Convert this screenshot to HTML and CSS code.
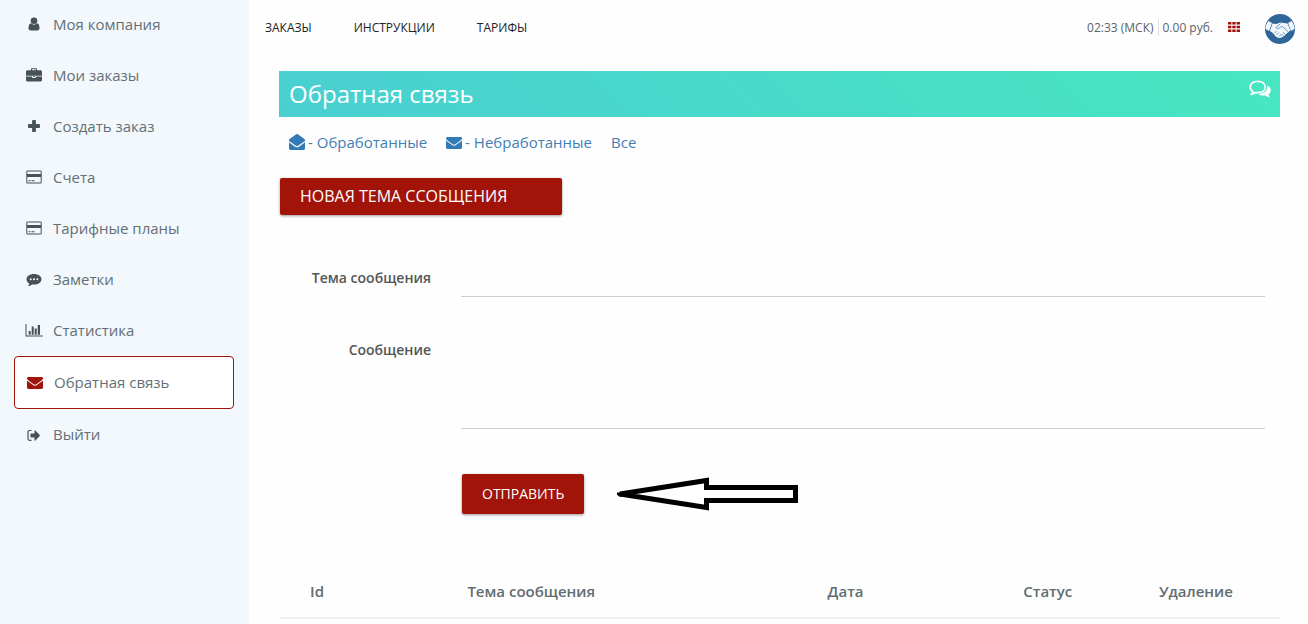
FILE: index.html
```html
<!DOCTYPE html>
<html lang="ru">
  <head>
    <meta charset="UTF-8" />
    <meta name="viewport" content="width=device-width, initial-scale=1.0" />
    <title>Обратная связь</title>
    <link rel="stylesheet" href="styles.css">
  </head>
  <body>
    <!-- Shared icons -->
    <svg class="sprite" aria-hidden="true">
      <symbol id="icon-card" viewBox="0 0 16 14">
        <path fill-rule="evenodd" d="M1.500 0.500h13a1.200 1.200 0 0 1 1.200 1.200v10.600a1.200 1.200 0 0 1-1.200 1.200h-13a1.200 1.200 0 0 1-1.200-1.200V1.700a1.200 1.200 0 0 1 1.200-1.200zM1.300 1.500V4h13.400V1.500zM1.300 7v5.500h13.400V7z" />
        <path d="M2.500 10.300h2v1h-2zM5.500 10.300h3v1h-3z" />
      </symbol>
      <symbol id="icon-mail" viewBox="0 -1 16 14">
        <path d="M0 2.200C0 1.400.6 1 1.400 1h13.200c.8 0 1.400.4 1.400 1.200 0 .8-.5 1.500-1.200 2L9.700 7.900C9.100 8.300 8.600 8.700 8 8.700s-1.100-.4-1.700-.8L1.200 4.200C.5 3.700 0 3 0 2.200z" />
        <path d="M0 4.500c.3.300.6.500.9.700l4.900 3.600c.7.500 1.400.9 2.200.9s1.500-.4 2.200-.9l4.900-3.600c.3-.2.600-.4.900-.7v7.100c0 .8-.6 1.400-1.400 1.400H1.400C.6 13 0 12.400 0 11.600z" />
      </symbol>
    </svg>

    <div class="page">
      <aside class="sidebar">
        <nav class="menu">
          <a class="menu-item" href="#">
            <svg class="icon" viewBox="0 0 16 14"><circle cx="8" cy="3.800" r="3.300" /><path d="M5.200 6.300C3.200 6.500 2.500 8.800 2.500 11c0 1.400.8 2.500 2 2.500h7c1.200 0 2-1.100 2-2.500 0-2.200-.7-4.500-2.700-4.700C9.300 8.100 6.700 8.100 5.200 6.300z" /></svg>
            Моя компания
          </a>
          <a class="menu-item" href="#">
            <svg class="icon" viewBox="0 0 16 14"><path fill-rule="evenodd" d="M5 2.300V1.200C5 .6 5.400.2 6 .2h4c.6 0 1 .4 1 1v1.100h3.500c.8 0 1.500.7 1.500 1.500v4H0v-4c0-.8.700-1.500 1.500-1.500zm1 0h4V1.200H6zM0 8.400h6V9c0 .6.400 1 1 1h2c.6 0 1-.4 1-1v-.6h6v3.600c0 .8-.7 1.500-1.500 1.500h-13C.7 13.500 0 12.800 0 12zM7 8.300h2v.8H7z" /></svg>
            Мои заказы
          </a>
          <a class="menu-item" href="#">
            <svg class="icon" viewBox="0 0 16 14"><path d="M7 1h2c.5 0 .9.400.9.900v3.200h3.200c.5 0 .9.400.9.900v2c0 .5-.4.900-.9.900H9.900v3.200c0 .5-.4.900-.9.900H7c-.5 0-.9-.4-.9-.9V8.900H2.900C2.400 8.900 2 8.500 2 8V6c0-.5.400-.9.900-.9h3.200V1.900C6.100 1.400 6.500 1 7 1z" /></svg>
            Создать заказ
          </a>
          <a class="menu-item" href="#">
            <svg class="icon"><use href="#icon-card" /></svg>
            Счета
          </a>
          <a class="menu-item" href="#">
            <svg class="icon"><use href="#icon-card" /></svg>
            Тарифные планы
          </a>
          <a class="menu-item" href="#">
            <svg class="icon" viewBox="0 0 16 14"><path fill-rule="evenodd" d="M8 2c4.300 0 7.500 2.300 7.500 5.200S12.300 12.500 8 12.500c-.6 0-1.200 0-1.700-.1-1.200.9-2.700 1.500-4.300 1.600.7-.7 1.200-1.500 1.300-2.500C1.600 10.500.5 9 .5 7.200.500 4.300 3.700 2 8 2zM4.700 6.200a1 1 0 1 0 .01 2 1 1 0 0 0 0-2zm3.300 0a1 1 0 1 0 .01 2 1 1 0 0 0 0-2zm3.300 0a1 1 0 1 0 .01 2 1 1 0 0 0 0-2z" /></svg>
            Заметки
          </a>
          <a class="menu-item" href="#">
            <svg class="icon icon-chart" viewBox="0 0 18 14"><path d="M.5 1h1v11.500H18v1H.5zM3.700 8h2v3.700h-2zM6.700 3.500h2v8.200h-2zM9.700 5.500h2v6.200h-2zM12.700 2h2.300v9.700h-2.300z" /></svg>
            Статистика
          </a>
          <a class="menu-item active" href="#">
            <svg class="icon"><use href="#icon-mail" /></svg>
            Обратная связь
          </a>
          <a class="menu-item" href="#">
            <svg class="icon" viewBox="0 -1 16 14"><path d="M5.500 2.500H3.800C2.600 2.500 2 3.100 2 4.300v6.200c0 1.200.6 1.800 1.800 1.800h1.700" fill="none" stroke="currentColor" stroke-width="1.200" /><path d="M4.500 5.500h4V3c0-.6.500-.8.900-.4l4.300 4.500c.3.300.3.600 0 .9l-4.300 4.500c-.4.400-.9.200-.9-.4V9.500h-4z" /></svg>
            Выйти
          </a>
        </nav>
      </aside>

      <main class="content">
        <header class="topbar">
          <nav class="top-links">
            <a href="#">ЗАКАЗЫ</a>
            <a href="#">ИНСТРУКЦИИ</a>
            <a href="#">ТАРИФЫ</a>
          </nav>
          <div class="top-info">
            <span class="time">02:33 (МСК)</span>
            <span class="balance">0.00 руб.</span>
            <button class="grid-button" type="button" aria-label="Меню">
              <svg viewBox="0 0 12 10" width="12" height="10"><path d="M0 0h3.400v2.600H0zM4.300 0h3.400v2.600H4.300zM8.600 0H12v2.600H8.600zM0 3.700h3.400v2.600H0zM4.300 3.700h3.400v2.600H4.300zM8.600 3.700H12v2.600H8.600zM0 7.400h3.400V10H0zM4.300 7.400h3.400V10H4.300zM8.600 7.400H12V10H8.600z" /></svg>
            </button>
            <a class="avatar" href="#" aria-label="Профиль">
              <svg viewBox="0 0 30 30" width="30" height="30">
                <circle cx="15" cy="15" r="15" fill="#2f6598" />
                <path d="M3.500 7l3.500 2-3 8-3.500-2c0-3 1-6 3-8zM26.500 7L23 9l3 8 3.500-2c0-3-1-6-3-8z" fill="#f1f6fb" />
                <path d="M7.500 9.500l4 .5 3.500-1.500 4 .5 3.500.5 2.800 7-2.500 2-3 3-3 2-3 .5-2.500-1-4-4.500-2.500-1.500z" fill="#f1f6fb" />
                <path d="M15.500 9.500L11 13.500c.5 1.800 2.500 1.500 4.500-.5l2-.5 6 5.500M9.500 19l2-2M11.500 21l2.500-2.500M14 22.500l2.500-2.500M18 18l3 3M16.500 20l2 2" fill="none" stroke="#6f9cc2" stroke-width="1" />
              </svg>
            </a>
          </div>
        </header>

        <section class="feedback">
          <div class="title-bar">
            <h1>Обратная связь</h1>
            <svg class="chat-icon" viewBox="0 0 22 18" width="22" height="18">
              <path d="M8.800 1.300c4.500 0 7.400 2.500 7.400 5.700s-2.900 5.700-7.400 5.700c-.7 0-1.400-.1-2-.2-1.200.9-2.600 1.600-4.100 1.700.7-.8 1.100-1.600 1.200-2.600C2.200 10.500 1.100 8.900 1.100 7c0-3.200 3.200-5.700 7.700-5.700z" fill="none" stroke="#fff" stroke-width="1.700" />
              <path d="M18 5.200c2.300 1 3.800 2.800 3.800 5 0 1.800-.9 3.300-2.400 4.400.2 1 .8 2 1.800 2.900-2-.2-3.600-.9-4.800-1.900-2.800.4-5.300-.1-7.200-1.500 5.200-.2 9.200-3.100 9.200-7 0-.7-.1-1.300-.4-1.900z" fill="#fff" />
            </svg>
          </div>

          <nav class="filters">
            <a href="#">
              <svg class="icon icon-open" viewBox="0 0 16 16"><path d="M0 6.200C0 5.700.2 5.300.6 5L6.500.8C7 .4 7.500 0 8 0s1 .4 1.500.8L15.400 5c.4.300.6.700.6 1.200v.7l-5.800 4.200c-.7.500-1.500 1-2.200 1s-1.500-.5-2.200-1L0 6.900z" /><path d="M0 8.300l5 3.600c1 .7 2 1.400 3 1.400s2-.7 3-1.400l5-3.600v6.200c0 .8-.7 1.500-1.500 1.500h-13C.7 16 0 15.300 0 14.500z" /></svg>
              - Обработанные
            </a>
            <a href="#">
              <svg class="icon"><use href="#icon-mail" /></svg>
              - Небработанные
            </a>
            <a href="#">Все</a>
          </nav>

          <button class="btn btn-new" type="button">НОВАЯ ТЕМА ССОБЩЕНИЯ</button>

          <form class="message-form">
            <label for="subject">Тема сообщения</label>
            <input type="text" id="subject" />
            <label for="message">Сообщение</label>
            <textarea id="message"></textarea>
            <div class="form-actions">
              <button class="btn" type="submit">ОТПРАВИТЬ</button>
              <svg class="arrow" viewBox="0 0 182 34" width="182" height="34"><path d="M4 17L90.500 3.500v7h89v13h-89v7z" fill="#fff" stroke="#000" stroke-width="5" stroke-linejoin="miter" stroke-miterlimit="2" /><path d="M1 15.500h6v4H3l-2-2z" /></svg>
            </div>
          </form>

          <table class="messages">
            <thead>
              <tr>
                <th class="col-id">Id</th>
                <th class="col-subject">Тема сообщения</th>
                <th class="col-date">Дата</th>
                <th class="col-status">Статус</th>
                <th class="col-delete">Удаление</th>
              </tr>
            </thead>
          </table>
        </section>
      </main>
    </div>
  </body>
</html>
```
FILE: styles.css
```css
* {
  box-sizing: border-box;
}

body {
  margin: 0;
  font-family: "Open Sans", "Noto Sans", sans-serif;
  font-size: 15px;
  color: #58666e;
  background: #fefefe;
}

a {
  text-decoration: none;
}

.sprite {
  display: none;
}

.icon {
  width: 16px;
  height: 14px;
  flex: none;
  fill: currentColor;
  color: #465158;
}

.page {
  display: flex;
  min-height: 100vh;
}

/* Sidebar */
.sidebar {
  width: 249px;
  flex: none;
  padding: 0 15px 0 14px;
  background: #f3f8fd;
}

.menu {
  margin-top: -1px;
}

.menu-item {
  display: flex;
  align-items: center;
  gap: 11px;
  height: 51px;
  padding: 0 0 2px 12px;
  color: #646f76;
}

.icon-chart {
  width: 18px;
  margin: 0 -1px;
}

.menu-item.active {
  height: 53px;
  background: #fff;
  border: 1px solid #a21309;
  border-radius: 4px;
}

.menu-item.active .icon {
  color: #a21309;
}

/* Top bar */
.content {
  flex: 1;
  min-width: 0;
}

.topbar {
  display: flex;
  justify-content: space-between;
  align-items: center;
  height: 56px;
  padding: 1px 13px 0 16px;
}

.top-links {
  display: flex;
  gap: 42px;
  padding-bottom: 3px;
  font-size: 12px;
}

.top-links a {
  color: #222;
}

.top-info {
  display: flex;
  align-items: center;
  font-size: 12px;
  color: #59636a;
}

.time,
.balance {
  margin-bottom: 2px;
}

.time {
  padding-right: 4px;
  border-right: 1px solid #ddd;
}

.balance {
  padding-left: 4px;
}

.grid-button {
  display: flex;
  margin: 0 25px 0 15px;
  padding: 0 0 3px;
  border: none;
  background: none;
  fill: #a21309;
  cursor: pointer;
}

.avatar {
  display: flex;
}

/* Feedback */
.feedback {
  padding: 15px 28px 0 30px;
}

.title-bar {
  display: flex;
  justify-content: space-between;
  height: 46px;
  padding: 9px 9px 0 10px;
  background: linear-gradient(45deg, #49cfd1, #47e6c1);
}

h1 {
  margin: 0;
  font-size: 24px;
  line-height: 28px;
  font-weight: 400;
  color: #fff;
}

.filters {
  display: flex;
  gap: 19px;
  padding: 14px 10px 16px;
  line-height: 22px;
}

.filters a {
  display: flex;
  align-items: center;
  gap: 3px;
  color: #427fb5;
}

.filters .icon {
  color: #337ab7;
}

.filters .icon-open {
  height: 16px;
}

.btn {
  height: 40px;
  padding: 0 20px 2px;
  border: none;
  border-radius: 2px;
  background: #a21309;
  box-shadow: 0 1px 3px rgba(0, 0, 0, 0.4);
  color: #fff;
  font-family: inherit;
  font-size: 14px;
  cursor: pointer;
}

.btn-new {
  display: block;
  width: 282px;
  height: 37px;
  margin: 9px 1px 0;
  font-size: 16px;
  text-align: left;
}

.message-form {
  display: grid;
  grid-template-columns: 152px 1fr;
  column-gap: 30px;
  padding: 48px 15px 0 0;
}

.message-form label {
  padding-top: 5px;
  font-size: 14px;
  line-height: 20px;
  font-weight: 600;
  text-align: right;
  color: #555;
}

.message-form input,
.message-form textarea {
  width: 100%;
  height: 34px;
  border: none;
  border-bottom: 1px solid #ccc;
  background: none;
  font: inherit;
  outline: none;
}

.message-form input {
  margin-bottom: 38px;
}

.message-form textarea {
  height: 94px;
  resize: none;
}

.form-actions {
  grid-column: 2;
  display: flex;
  align-items: center;
  gap: 32px;
  padding: 45px 0 0 1px;
}

/* Messages table */
.messages {
  width: 100%;
  margin-top: 51px;
  border-collapse: collapse;
  table-layout: fixed;
}

.messages th {
  height: 53px;
  padding: 0;
  border-bottom: 2px solid #f2f2f2;
  font-weight: 600;
  color: #616c73;
}

.col-id {
  width: 7.6%;
}

.col-subject {
  width: 35.2%;
}

.col-date {
  width: 27.6%;
}

.col-status {
  width: 12.8%;
}

.col-delete {
  width: 16.8%;
}
```
